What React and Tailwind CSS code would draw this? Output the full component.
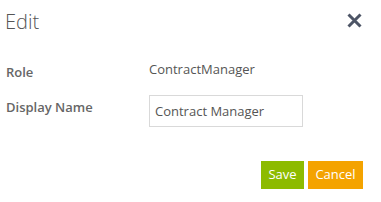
import React from 'react';

const App = () => {
  return (
    <div className="w-[381px] h-[202px] bg-white font-['Segoe_UI','Open_Sans',sans-serif] text-[13px] relative">
      <div className="flex items-start justify-between pl-[5px] pr-[19px] pt-[7px]">
        <h2 className="text-[20px] font-light text-[#555] leading-[30px]">Edit</h2>
        <button className="mt-[6px] text-[#4d5566]">
          <svg width="15" height="15" viewBox="0 0 15 15">
            <path d="M1.5 1.5 L13.5 13.5 M13.5 1.5 L1.5 13.5" stroke="currentColor" strokeWidth="3" strokeLinecap="butt" />
          </svg>
        </button>
      </div>

      <div className="grid grid-cols-[143px_1fr] pl-[6px] mt-[26px] text-[#555]">
        <div className="font-semibold text-[#666] leading-[18px]">Role</div>
        <div className="leading-[16px] -mt-[2px]">ContractManager</div>
        <div className="font-semibold text-[#666] leading-[18px] mt-[17px]">Display Name</div>
        <div className="mt-[14px]">
          <input
            className="w-[154px] h-[32px] border border-[#d9d9d9] px-[5px] text-[13px] text-[#555] outline-none"
            defaultValue="Contract Manager"
          />
        </div>
      </div>

      <div className="flex justify-end gap-[4px] pr-[18px] mt-[34px]">
        <button className="h-[28px] w-[43px] bg-[#8dbb00] text-white text-[13px]">Save</button>
        <button className="h-[28px] w-[55px] bg-[#f4a300] text-white text-[13px]">Cancel</button>
      </div>
    </div>
  );
};

export default App;
